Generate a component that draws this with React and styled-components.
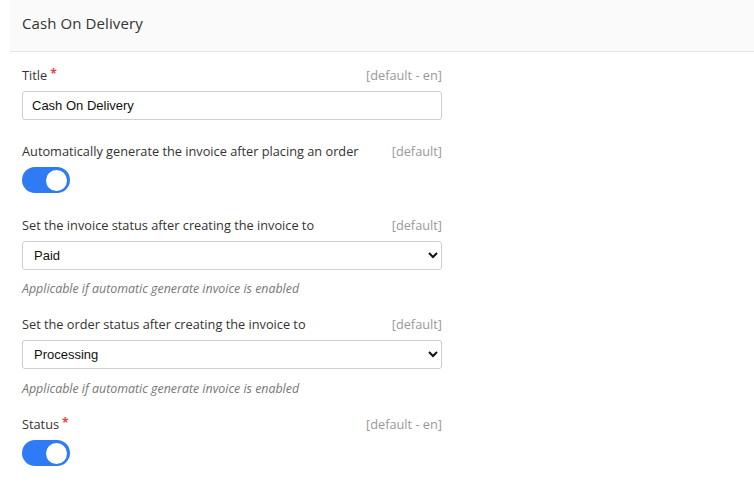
import React from "react";
import styled, { createGlobalStyle } from "styled-components";

const Global = createGlobalStyle`
  html, body { margin: 0; padding: 0; background: #fff; }
  body { font-family: "Open Sans", "Liberation Sans", sans-serif; color: #333; }
  * { box-sizing: border-box; }
`;

const Page = styled.div`
  padding-left: 10px;
  width: 754px;
`;

const Card = styled.section`
  background: #fff;
`;

const CardHeader = styled.header`
  height: 52px;
  background: #fafafa;
  border-bottom: 1px solid #e4e4e4;
  display: flex;
  align-items: center;
  padding: 0 12px 6px;
  font-size: 15px;
  color: #333;
  letter-spacing: 0.1px;
`;

const Body = styled.div`
  padding: 13px 12px 0;
  width: 444px;
  display: flex;
  flex-direction: column;
`;

const Field = styled.div`
  display: flex;
  flex-direction: column;
  margin-bottom: ${(p) => p.$after}px;
`;

const LabelRow = styled.div`
  display: flex;
  justify-content: space-between;
  align-items: center;
  height: 20px;
  margin-bottom: 6px;
  font-size: 12.75px;
`;

const Label = styled.label`
  color: #333;
`;

const Req = styled.span`
  color: #e2424b;
  margin-left: 3px;
  font-size: 12px;
  font-weight: 700;
  position: relative;
  top: -2px;
`;

const Scope = styled.span`
  color: #999;
`;

const TextInput = styled.input`
  height: 29px;
  border: 1px solid #cfcfcf;
  border-radius: 3px;
  padding: 0 9px;
  font-family: "Liberation Sans", Arial, sans-serif;
  font-size: 13px;
  color: #111;
  outline: none;
`;

const Select = styled.select`
  height: 29px;
  border: 1px solid #cfcfcf;
  border-radius: 3px;
  padding: 0 7px;
  font-family: "Liberation Sans", Arial, sans-serif;
  font-size: 13px;
  color: #111;
  background: #fff;
  outline: none;
`;

const Helper = styled.div`
  margin-top: ${(p) => p.$top}px;
  font-size: 12.4px;
  line-height: 16px;
  font-style: italic;
  color: #777;
`;

const Track = styled.div`
  width: 48px;
  height: 26px;
  border-radius: 13px;
  background: ${(p) => (p.$on ? "#2f7bf5" : "#ccc")};
  display: flex;
  align-items: center;
  justify-content: ${(p) => (p.$on ? "flex-end" : "flex-start")};
  padding: 0 3px;
`;

const Knob = styled.div`
  width: 21px;
  height: 21px;
  border-radius: 50%;
  background: #fff;
`;

const Toggle = ({ on }) => (
  <Track $on={on}>
    <Knob />
  </Track>
);

export default function App() {
  return (
    <>
      <Global />
      <Page>
        <Card>
          <CardHeader>Cash On Delivery</CardHeader>
          <Body>
            <Field $after={21}>
              <LabelRow>
                <Label>
                  Title<Req>*</Req>
                </Label>
                <Scope>[default - en]</Scope>
              </LabelRow>
              <TextInput defaultValue="Cash On Delivery" />
            </Field>
            <Field $after={22}>
              <LabelRow>
                <Label>Automatically generate the invoice after placing an order</Label>
                <Scope>[default]</Scope>
              </LabelRow>
              <Toggle on />
            </Field>
            <Field $after={17}>
              <LabelRow>
                <Label>Set the invoice status after creating the invoice to</Label>
                <Scope>[default]</Scope>
              </LabelRow>
              <Select defaultValue="paid">
                <option value="paid">Paid</option>
                <option value="pending">Pending</option>
              </Select>
              <Helper $top={11}>Applicable if automatic generate invoice is enabled</Helper>
            </Field>
            <Field $after={17}>
              <LabelRow>
                <Label>Set the order status after creating the invoice to</Label>
                <Scope>[default]</Scope>
              </LabelRow>
              <Select defaultValue="processing">
                <option value="processing">Processing</option>
                <option value="complete">Complete</option>
              </Select>
              <Helper $top={12}>Applicable if automatic generate invoice is enabled</Helper>
            </Field>
            <Field $after={0}>
              <LabelRow>
                <Label>
                  Status<Req>*</Req>
                </Label>
                <Scope>[default - en]</Scope>
              </LabelRow>
              <Toggle on />
            </Field>
          </Body>
        </Card>
      </Page>
    </>
  );
}
